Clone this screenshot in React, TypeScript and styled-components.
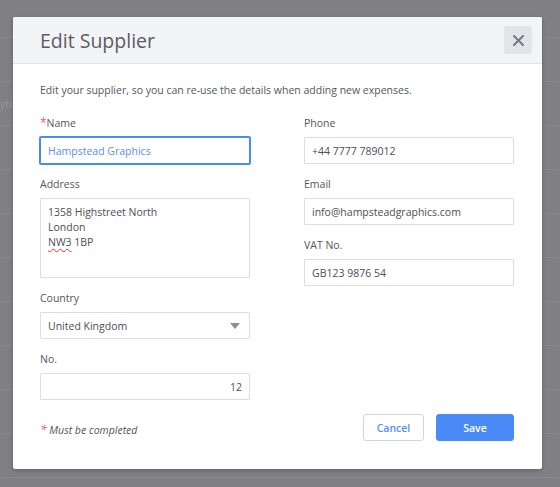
import React from "react";
import styled, { createGlobalStyle } from "styled-components";

const Global = createGlobalStyle`
  html, body { margin: 0; padding: 0; }
  body { font-family: "Open Sans", "Liberation Sans", sans-serif; }
  * { box-sizing: border-box; }
`;

const Backdrop = styled.div`
  position: relative;
  width: 560px;
  height: 487px;
  overflow: hidden;
  background-color: #808084;
  background-image: repeating-linear-gradient(
    to bottom,
    transparent 0px,
    transparent 37px,
    #89898c 37px,
    #89898c 38px,
    transparent 38px,
    transparent 44px
  );
`;

const GhostText = styled.span`
  position: absolute;
  left: 0px;
  top: 97px;
  font-size: 10.5px;
  color: #98989b;
`;

const Modal = styled.div`
  position: absolute;
  left: 13px;
  top: 17px;
  width: 529px;
  background: #ffffff;
  border-radius: 2px;
  box-shadow: 0 1px 4px rgba(0, 0, 0, 0.25);
  overflow: hidden;
`;

const Header = styled.div`
  height: 47px;
  display: flex;
  align-items: center;
  justify-content: space-between;
  padding: 0 10px 0 27px;
  background: #f3f4f6;
  border-bottom: 1px solid #e1e2e8;
`;

const Title = styled.h2`
  margin: 0;
  font-size: 19.5px;
  font-weight: 400;
  color: #5b5b66;
`;

const CloseButton = styled.button`
  width: 28px;
  height: 28px;
  border: none;
  border-radius: 2px;
  background: #e3e4ea;
  display: flex;
  align-items: center;
  justify-content: center;
  padding: 0;
`;

const Body = styled.div`
  padding: 18px 28px 28px 27px;
`;

const Intro = styled.p`
  margin: 0 0 18px;
  font-size: 10.5px;
  line-height: 16px;
  color: #55555d;
`;

const Columns = styled.div`
  display: grid;
  grid-template-columns: 210px 210px;
  column-gap: 54px;
  align-items: start;
`;

const Column = styled.div`
  display: flex;
  flex-direction: column;
  gap: 13px;
`;

const Field = styled.div`
  display: flex;
  flex-direction: column;
`;

const Label = styled.label`
  font-size: 10.5px;
  line-height: 15px;
  height: 15px;
  color: #55555d;
  margin-bottom: 6px;
`;

const Req = styled.span`
  color: #ec5a6a;
  font-size: 12px;
  line-height: 0;
`;

const Input = styled.input<{ $focused?: boolean; $right?: boolean }>`
  height: 27px;
  width: 100%;
  border: 1px solid ${(p) => (p.$focused ? "#4a8af4" : "#dcdce6")};
  box-shadow: ${(p) => (p.$focused ? "0 0 0 1px #4a8af4" : "none")};
  border-radius: 1px;
  padding: 0 7px;
  font-family: "Open Sans", "Liberation Sans", sans-serif;
  font-size: 10.5px;
  color: ${(p) => (p.$focused ? "#5b8df0" : "#4e4e56")};
  text-align: ${(p) => (p.$right ? "right" : "left")};
  outline: none;
  background: #fff;
`;

const TextArea = styled.div`
  height: 80px;
  border: 1px solid #dcdce6;
  border-radius: 1px;
  padding: 6px 7px;
  font-size: 10.5px;
  line-height: 15px;
  color: #4e4e56;
`;

const Misspelled = styled.span`
  text-decoration: underline wavy #e0342f;
  text-decoration-thickness: 1px;
  text-underline-offset: 2px;
`;

const Select = styled.div`
  height: 27px;
  border: 1px solid #dcdce6;
  border-radius: 1px;
  padding: 0 9px 0 7px;
  display: flex;
  align-items: center;
  justify-content: space-between;
  font-size: 10.5px;
  color: #4e4e56;
`;

const Caret = styled.span`
  width: 0;
  height: 0;
  border-left: 5px solid transparent;
  border-right: 5px solid transparent;
  border-top: 6px solid #8c8c94;
`;

const Footer = styled.div`
  margin-top: 14px;
  display: flex;
  align-items: center;
  justify-content: space-between;
`;

const Note = styled.span`
  font-size: 10.5px;
  font-style: italic;
  color: #55555d;
  padding-top: 4px;
`;

const Buttons = styled.div`
  display: flex;
  gap: 12px;
`;

const Button = styled.button<{ $primary?: boolean }>`
  height: 27px;
  width: ${(p) => (p.$primary ? "78px" : "61px")};
  border-radius: 3px;
  font-family: "Open Sans", "Liberation Sans", sans-serif;
  font-size: 10.5px;
  font-weight: 600;
  padding: 0;
  border: 1px solid ${(p) => (p.$primary ? "#4a8af7" : "#d4d4dc")};
  background: ${(p) => (p.$primary ? "#4a8af7" : "#ffffff")};
  color: ${(p) => (p.$primary ? "#ffffff" : "#5b8df0")};
`;

export default function App() {
  return (
    <>
      <Global />
      <Backdrop>
        <GhostText>ytor</GhostText>
        <Modal>
          <Header>
            <Title>Edit Supplier</Title>
            <CloseButton aria-label="Close">
              <svg width="11" height="11" viewBox="0 0 11 11">
                <path d="M1 1 L10 10 M10 1 L1 10" stroke="#77777f" strokeWidth="2" strokeLinecap="round" />
              </svg>
            </CloseButton>
          </Header>
          <Body>
            <Intro>Edit your supplier, so you can re-use the details when adding new expenses.</Intro>
            <Columns>
              <Column>
                <Field>
                  <Label>
                    <Req>*</Req>Name
                  </Label>
                  <Input $focused defaultValue="Hampstead Graphics" />
                </Field>
                <Field>
                  <Label>Address</Label>
                  <TextArea>
                    1358 Highstreet North
                    <br />
                    London
                    <br />
                    <Misspelled>NW3</Misspelled> 1BP
                  </TextArea>
                </Field>
                <Field>
                  <Label>Country</Label>
                  <Select>
                    <span>United Kingdom</span>
                    <Caret />
                  </Select>
                </Field>
                <Field>
                  <Label>No.</Label>
                  <Input $right defaultValue="12" />
                </Field>
              </Column>
              <Column>
                <Field>
                  <Label>Phone</Label>
                  <Input defaultValue="+44 7777 789012" />
                </Field>
                <Field>
                  <Label>Email</Label>
                  <Input defaultValue="info@hampsteadgraphics.com" />
                </Field>
                <Field>
                  <Label>VAT No.</Label>
                  <Input defaultValue="GB123 9876 54" />
                </Field>
              </Column>
            </Columns>
            <Footer>
              <Note>
                <Req>*</Req> Must be completed
              </Note>
              <Buttons>
                <Button>Cancel</Button>
                <Button $primary>Save</Button>
              </Buttons>
            </Footer>
          </Body>
        </Modal>
      </Backdrop>
    </>
  );
}
